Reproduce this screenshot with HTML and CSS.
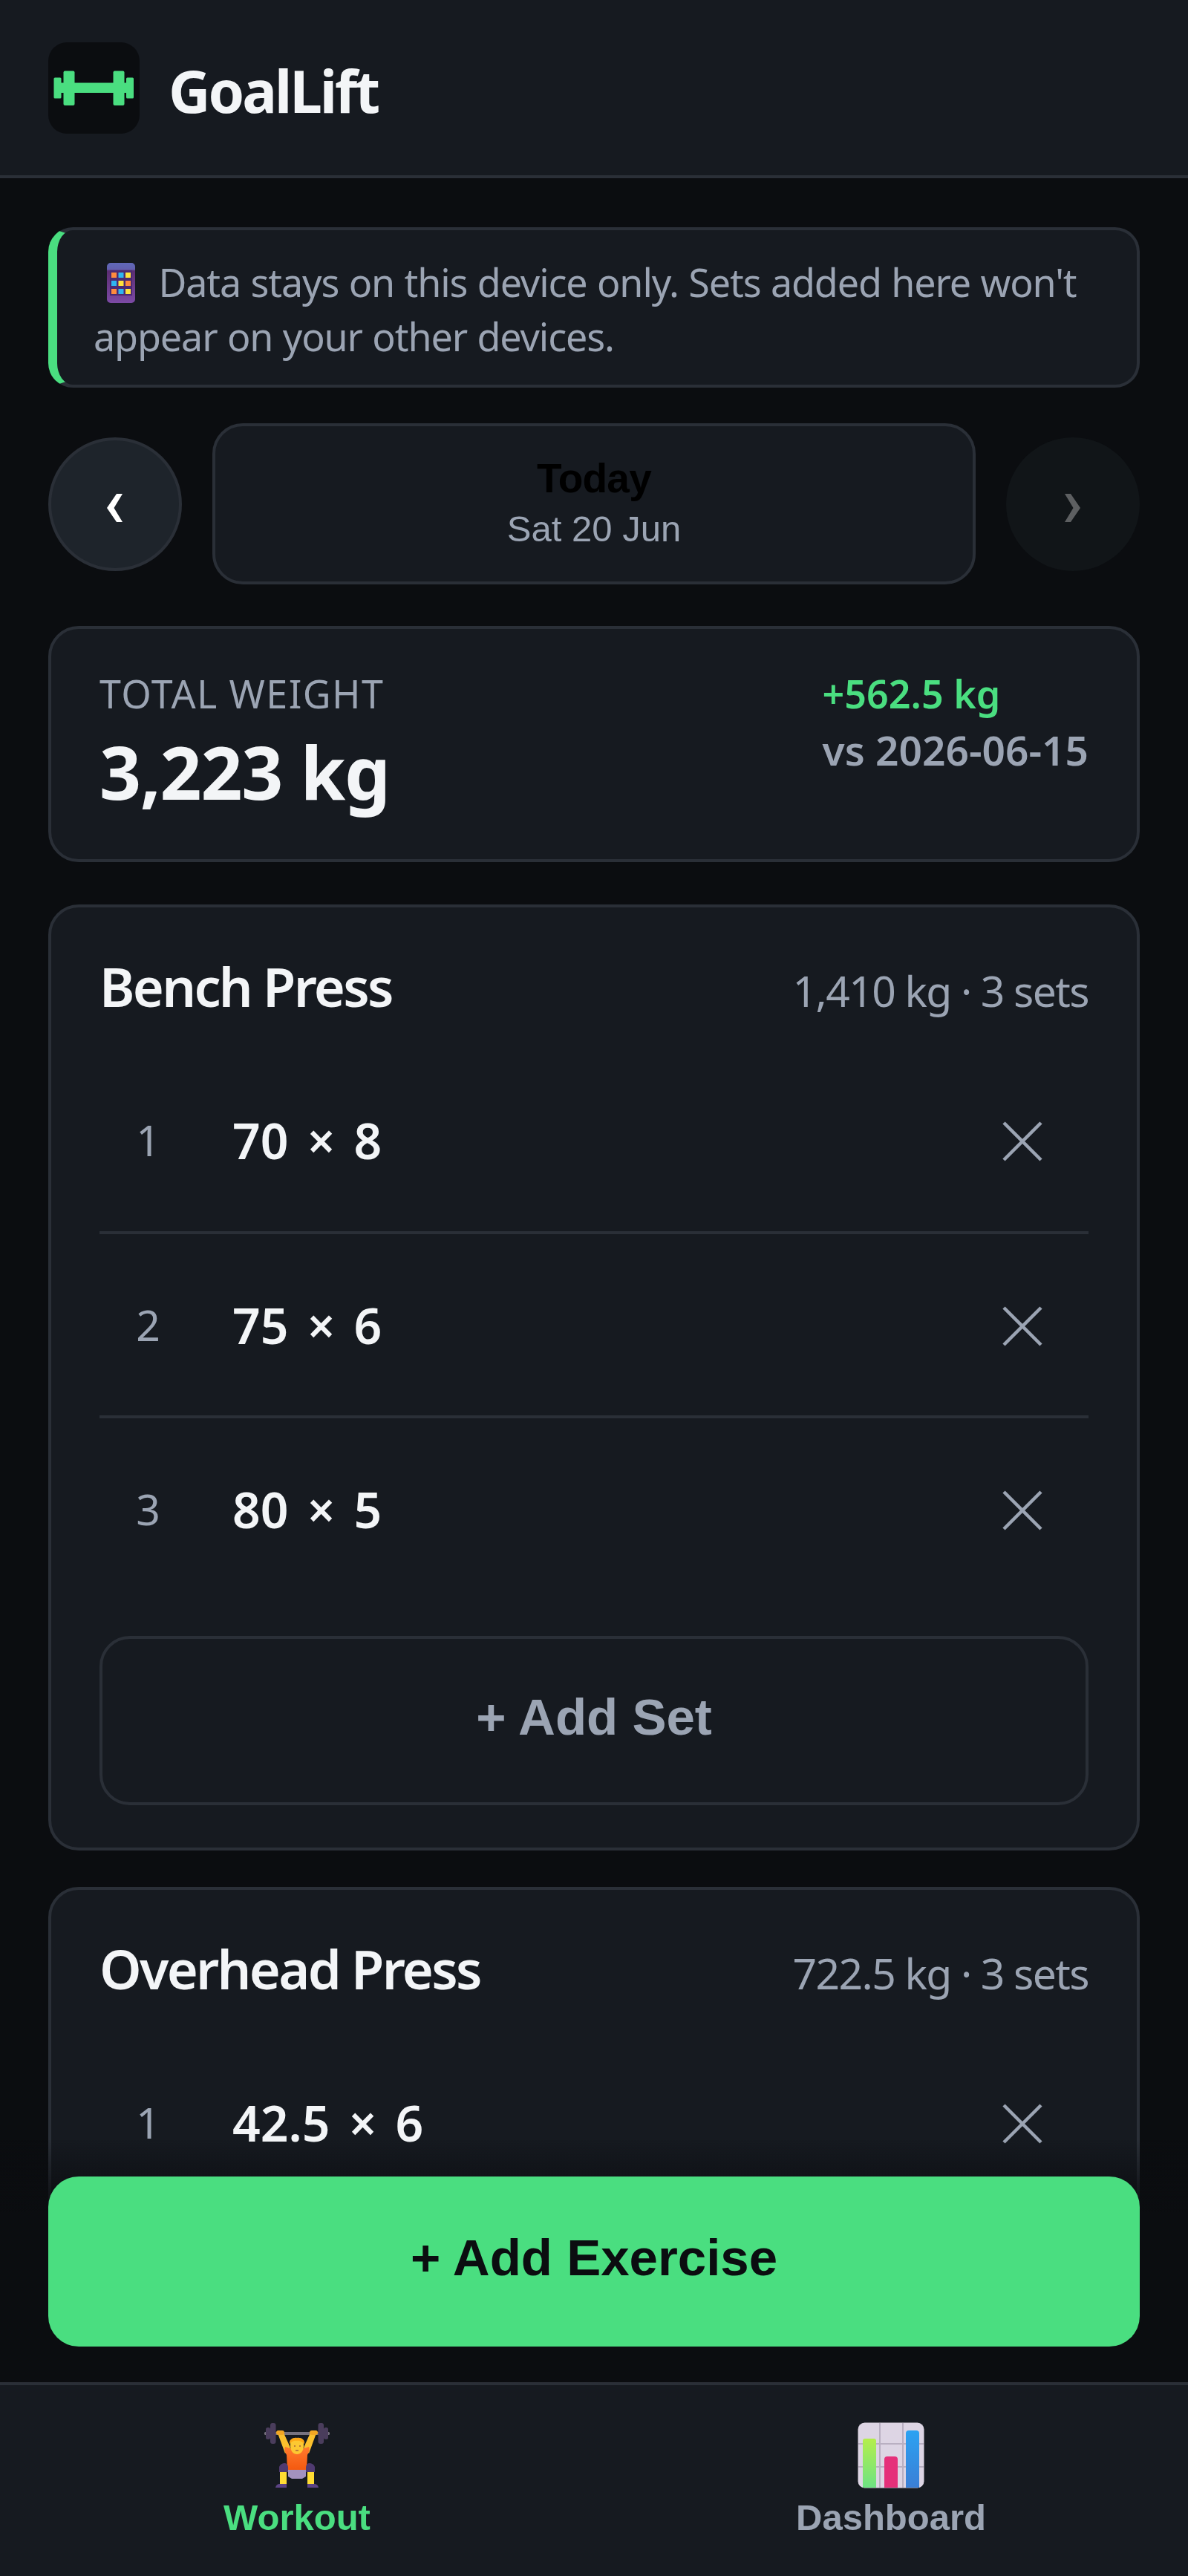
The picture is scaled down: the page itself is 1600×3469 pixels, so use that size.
FILE: index.html
```html
<!DOCTYPE html>
<html lang="en">
<head>
  <meta charset="UTF-8" />
  <meta name="viewport" content="width=device-width, initial-scale=1.0" />
  <title>GoalLift</title>
  <link rel="stylesheet" href="styles.css">
</head>
<body>
  <header class="app-header">
    <svg class="logo" viewBox="0 0 123 123">
      <rect width="123" height="123" rx="25" fill="#0b0d10"/>
      <g fill="#4ade80">
        <rect x="7.5" y="47.5" width="10" height="28" rx="1.5"/>
        <rect x="20.5" y="38.5" width="15" height="46.5" rx="2"/>
        <rect x="16" y="54.5" width="90" height="13.5"/>
        <rect x="87.5" y="38.5" width="15" height="46.5" rx="2"/>
        <rect x="105" y="47.5" width="10" height="28" rx="1.5"/>
      </g>
    </svg>
    <h1>GoalLift</h1>
  </header>

  <main class="content">
    <div class="notice">
      <svg class="phone-icon" viewBox="0 0 38 54">
        <defs>
          <linearGradient id="phoneBody" x1="0" y1="0" x2="0" y2="1">
            <stop offset="0" stop-color="#6068b8"/>
            <stop offset="0.16" stop-color="#6260ae"/>
            <stop offset="0.2" stop-color="#5b2d72"/>
            <stop offset="1" stop-color="#7c4aa5"/>
          </linearGradient>
        </defs>
        <rect width="38" height="54" rx="5" fill="url(#phoneBody)"/>
        <rect x="4" y="10" width="30" height="34" fill="#4b2a72"/>
        <g fill="#ff8b3d"><rect x="6" y="13" width="7" height="7"/><rect x="25" y="24" width="7" height="7"/><rect x="6" y="35" width="7" height="7"/></g>
        <g fill="#2fb5f0"><rect x="15.5" y="13" width="7" height="7"/><rect x="6" y="24" width="7" height="7"/><rect x="15.5" y="35" width="7" height="7"/></g>
        <g fill="#ffe23c"><rect x="25" y="13" width="7" height="7"/><rect x="15.5" y="24" width="7" height="7"/><rect x="25" y="35" width="7" height="7"/></g>
      </svg>
      Data stays on this device only. Sets added here won't<br>appear on your other devices.
    </div>

    <!-- Date picker -->
    <div class="date-nav">
      <button class="round-btn" aria-label="Previous day">
        <svg viewBox="0 0 21 38"><path d="M13 0h8L9.5 19 21 38h-8L0 19z" fill="currentColor"/></svg>
      </button>
      <button class="date-btn">
        <span class="date-main">Today</span>
        <span class="date-sub">Sat 20 Jun</span>
      </button>
      <button class="round-btn" aria-label="Next day" disabled>
        <svg viewBox="0 0 21 38"><path d="M8 0H0l11.5 19L0 38h8l13-19z" fill="currentColor"/></svg>
      </button>
    </div>

    <section class="card total">
      <div>
        <div class="total-label">TOTAL WEIGHT</div>
        <div class="total-value">3,223 kg</div>
      </div>
      <div class="compare">
        <div class="delta">+562.5 kg</div>
        <div class="versus">vs 2026-06-15</div>
      </div>
    </section>

    <section class="card exercise">
      <div class="exercise-head">
        <h2>Bench Press</h2>
        <span class="exercise-meta">1,410 kg · 3 sets</span>
      </div>
      <ul class="sets">
        <li>
          <span class="set-no">1</span><span class="set-value">70 × 8</span>
          <button class="remove" aria-label="Remove set"><svg viewBox="0 0 54 54"><path d="M2 2l50 50M52 2L2 52"/></svg></button>
        </li>
        <li>
          <span class="set-no">2</span><span class="set-value">75 × 6</span>
          <button class="remove" aria-label="Remove set"><svg viewBox="0 0 54 54"><path d="M2 2l50 50M52 2L2 52"/></svg></button>
        </li>
        <li>
          <span class="set-no">3</span><span class="set-value">80 × 5</span>
          <button class="remove" aria-label="Remove set"><svg viewBox="0 0 54 54"><path d="M2 2l50 50M52 2L2 52"/></svg></button>
        </li>
      </ul>
      <button class="add-set">+ Add Set</button>
    </section>

    <section class="card exercise">
      <div class="exercise-head">
        <h2>Overhead Press</h2>
        <span class="exercise-meta">722.5 kg · 3 sets</span>
      </div>
      <ul class="sets">
        <li>
          <span class="set-no">1</span><span class="set-value">42.5 × 6</span>
          <button class="remove" aria-label="Remove set"><svg viewBox="0 0 54 54"><path d="M2 2l50 50M52 2L2 52"/></svg></button>
        </li>
      </ul>
    </section>
  </main>

  <div class="action-bar">
    <button class="add-exercise">+ Add Exercise</button>
  </div>

  <nav class="tabs">
    <button class="tab active">
      <svg class="tab-icon" viewBox="0 0 90 90">
        <defs>
          <linearGradient id="shirt" x1="0" y1="0" x2="0" y2="1">
            <stop offset="0" stop-color="#ff7a2e"/>
            <stop offset="1" stop-color="#f4590f"/>
          </linearGradient>
        </defs>
        <!-- barbell -->
        <rect x="1" y="13" width="88" height="4" rx="1.5" fill="#77737f"/>
        <g fill="#4a3d5c">
          <rect x="3" y="7" width="6" height="16" rx="2.5"/><rect x="9" y="1" width="7.5" height="28" rx="3"/>
          <rect x="73.5" y="1" width="7.5" height="28" rx="3"/><rect x="81" y="7" width="6" height="16" rx="2.5"/>
        </g>
        <!-- lifter -->
        <path d="M18 12h8l10 22-7 8zM72 12h-8L54 34l7 8z" fill="#fbc02d"/>
        <rect x="17" y="11" width="11" height="6" rx="3" fill="#f3a623"/>
        <rect x="62" y="11" width="11" height="6" rx="3" fill="#f3a623"/>
        <path d="M29 33l6 2h20l6-2q2 4-2 11l-1 20H32l-1-20q-4-7-2-11z" fill="url(#shirt)"/>
        <path d="M36 31c0-8 3-10 9-10s9 2 9 10c0 8-4 12-9 12s-9-4-9-12z" fill="#fcc832"/>
        <path d="M35 29c-1-6 5-9 10-8 5-1 11 2 10 8-4-3-7-5-10-4-4-1-7 1-10 4z" fill="#ffa916"/>
        <path d="M41 32h2M48 32h2M43 38h4" stroke="#a8603a" stroke-width="1.6"/>
        <path d="M33 64h24v9l-5 3H38l-5-3z" fill="#a392bf"/>
        <rect x="22" y="66" width="9" height="18" fill="#ffdc33"/>
        <rect x="59" y="66" width="9" height="18" fill="#ffdc33"/>
        <path d="M21 67v-7q2-5 8-5 4 1 4 6v6zM69 67v-7q-2-5-8-5-4 1-4 6v6z" fill="#4f3a70"/>
        <path d="M16 88q1-5 6-5h9v5zM74 88q-1-5-6-5h-9v5z" fill="#5c4385"/>
      </svg>
      <span>Workout</span>
    </button>
    <button class="tab">
      <svg class="tab-icon" viewBox="0 0 90 90">
        <defs>
          <linearGradient id="barGreen" x1="0" y1="0" x2="0" y2="1"><stop offset="0" stop-color="#b4ee4c"/><stop offset="1" stop-color="#6de283"/></linearGradient>
          <linearGradient id="barBlue" x1="0" y1="0" x2="0" y2="1"><stop offset="0" stop-color="#2ba2f2"/><stop offset="1" stop-color="#3b7fd6"/></linearGradient>
        </defs>
        <rect x="0.5" y="0.5" width="89" height="88" rx="9" fill="#ddd5e4"/>
        <path d="M30 1v87M61 1v87M1 29h88M1 60h88" stroke="#b9b0c2" stroke-width="2"/>
        <path d="M7 88V25q0-3 3-3h12q3 0 3 3v63z" fill="url(#barGreen)"/>
        <path d="M36 88V50q0-4 4-4h10q4 0 4 4v38z" fill="#e5307a"/>
        <path d="M65 88V15q0-4 4-4h10q4 0 4 4v73z" fill="url(#barBlue)"/>
      </svg>
      <span>Dashboard</span>
    </button>
  </nav>
</body>
</html>
```

FILE: styles.css
```css
* {
  margin: 0;
  padding: 0;
  box-sizing: border-box;
}

:root {
  --bg: #0b0d10;
  --surface: #161a20;
  --line: #2a2f37;
  --text: #f3f5f7;
  --muted: #9ba4b3;
  --green: #4ade80;
}

body {
  height: 100vh;
  overflow: hidden;
  background: var(--bg);
  color: var(--text);
  font-family: 'Segoe UI', 'Noto Sans', sans-serif;
}

button {
  border: none;
  background: none;
  font-family: Arial, 'Liberation Sans', sans-serif;
}

svg {
  display: block;
}

/* Header */
.app-header {
  display: flex;
  align-items: center;
  gap: 39px;
  height: 240px;
  padding: 0 65px;
  background: var(--surface);
  border-bottom: 4px solid var(--line);
}

.logo {
  width: 123px;
  height: 123px;
}

h1 {
  margin-top: 8px;
  font-size: 78px;
  font-weight: 700;
  letter-spacing: -3px;
}

.content {
  padding: 66px 65px 0;
}

.notice {
  height: 216px;
  padding: 33px 30px 0 49px;
  background: var(--surface);
  border: 4px solid var(--line);
  border-left: 12px solid var(--green);
  border-radius: 33px;
  color: var(--muted);
  font-size: 52px;
  line-height: 73px;
  letter-spacing: -1.1px;
  word-spacing: 1px;
  white-space: nowrap;
}

.phone-icon {
  display: inline-block;
  width: 38px;
  height: 54px;
  margin: 0 18px 0 18px;
  vertical-align: -8px;
}

/* Date picker */
.date-nav {
  display: flex;
  align-items: center;
  gap: 41px;
  margin-top: 48px;
}

.round-btn {
  display: flex;
  align-items: center;
  justify-content: center;
  width: 180px;
  height: 180px;
  padding: 10px 2px 0 0;
  border: 4px solid var(--line);
  border-radius: 50%;
  background: #1e242b;
  color: #fff;
}

.round-btn svg {
  width: 21px;
  height: 38px;
}

.round-btn:disabled {
  border-color: transparent;
  background: #111518;
  color: #5d5f61;
}

.date-btn {
  display: flex;
  flex: 1;
  flex-direction: column;
  align-items: center;
  justify-content: center;
  height: 217px;
  background: var(--surface);
  border: 4px solid var(--line);
  border-radius: 41px;
}

.date-main {
  color: #000;
  font-size: 55px;
  font-weight: 700;
  line-height: 67px;
  letter-spacing: -0.8px;
}

.date-sub {
  color: var(--muted);
  font-size: 49px;
  line-height: 69px;
}

/* Cards */
.card {
  background: var(--surface);
  border: 4px solid var(--line);
  border-radius: 41px;
}

.total {
  display: flex;
  justify-content: space-between;
  height: 318px;
  margin-top: 56px;
  padding: 50px 65px;
}

.total-label {
  color: var(--muted);
  font-size: 52px;
  line-height: 73px;
  letter-spacing: 1.4px;
}

.total-value {
  font-size: 98px;
  font-weight: 700;
  line-height: 138px;
  letter-spacing: -1.2px;
}

.compare {
  font-weight: 600;
}

.delta {
  color: var(--green);
  font-size: 52px;
  line-height: 73px;
}

.versus {
  color: var(--muted);
  font-size: 55px;
  line-height: 79px;
}

.exercise {
  margin-top: 49px;
  padding: 56px 65px 57px;
}

.total + .exercise {
  margin-top: 57px;
}

.exercise-head {
  display: flex;
  align-items: baseline;
  justify-content: space-between;
  height: 100px;
  margin-bottom: 35px;
  line-height: 100px;
}

h2 {
  font-size: 72px;
  font-weight: 600;
  letter-spacing: -2.7px;
}

.exercise-meta {
  color: var(--muted);
  font-size: 57px;
  letter-spacing: -1.6px;
}

.sets {
  list-style: none;
}

.sets li {
  display: flex;
  align-items: center;
  height: 248.5px;
  border-bottom: 4px solid var(--line);
}

.sets li:last-child {
  height: 244.5px;
  border-bottom: none;
}

.set-no {
  width: 131px;
  margin-right: 48px;
  color: var(--muted);
  font-size: 57px;
  text-align: center;
}

.set-value {
  flex: 1;
  font-size: 66px;
  font-weight: 600;
  word-spacing: 8px;
}

.remove {
  display: flex;
  align-items: center;
  justify-content: center;
  width: 178px;
  height: 180px;
  padding-top: 4px;
}

.remove svg {
  width: 54px;
  height: 54px;
  fill: none;
  stroke: var(--muted);
  stroke-width: 4.5;
}

.add-set {
  display: block;
  width: 100%;
  height: 228px;
  margin-top: 48px;
  padding-bottom: 9px;
  border: 4px solid var(--line);
  border-radius: 41px;
  color: var(--muted);
  font-size: 69px;
  font-weight: 700;
}

/* Sticky add button, content fades out behind it */
.action-bar {
  position: fixed;
  left: 0;
  right: 0;
  bottom: 261px;
  padding: 49px 65px 48px;
  background: linear-gradient(to top, var(--bg) 70%, transparent);
}

.add-exercise {
  display: block;
  width: 100%;
  height: 229px;
  padding-bottom: 10px;
  border-radius: 41px;
  background: var(--green);
  color: var(--bg);
  font-size: 69px;
  font-weight: 700;
}

/* Bottom tabs */
.tabs {
  position: fixed;
  left: 0;
  right: 0;
  bottom: 0;
  display: flex;
  height: 261px;
  background: var(--surface);
  border-top: 4px solid var(--line);
}

.tab {
  display: flex;
  flex: 1;
  flex-direction: column;
  align-items: center;
  gap: 8px;
  padding-top: 50px;
  color: var(--muted);
  font-size: 49px;
  font-weight: 700;
  line-height: 60px;
}

.tab.active {
  color: var(--green);
}

.tab-icon {
  width: 90px;
  height: 90px;
}
```
